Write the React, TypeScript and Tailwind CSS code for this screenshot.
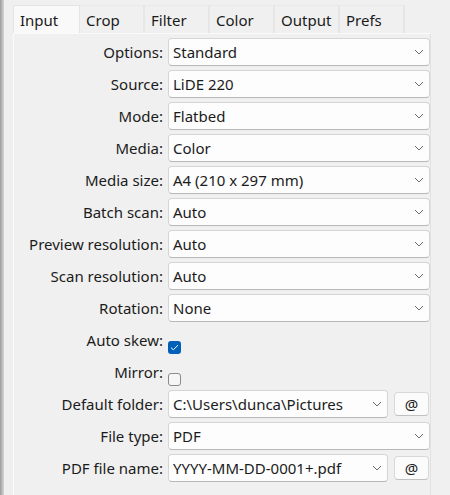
import React from 'react';

const font = { fontFamily: '"Noto Sans", "Open Sans", sans-serif' };

const tabs = ['Input', 'Crop', 'Filter', 'Color', 'Output', 'Prefs'];

type Row =
  | { label: string; kind: 'combo'; value: string; button?: boolean }
  | { label: string; kind: 'check'; checked: boolean };

const rows: Row[] = [
  { label: 'Options:', kind: 'combo', value: 'Standard' },
  { label: 'Source:', kind: 'combo', value: 'LiDE 220' },
  { label: 'Mode:', kind: 'combo', value: 'Flatbed' },
  { label: 'Media:', kind: 'combo', value: 'Color' },
  { label: 'Media size:', kind: 'combo', value: 'A4 (210 x 297 mm)' },
  { label: 'Batch scan:', kind: 'combo', value: 'Auto' },
  { label: 'Preview resolution:', kind: 'combo', value: 'Auto' },
  { label: 'Scan resolution:', kind: 'combo', value: 'Auto' },
  { label: 'Rotation:', kind: 'combo', value: 'None' },
  { label: 'Auto skew:', kind: 'check', checked: true },
  { label: 'Mirror:', kind: 'check', checked: false },
  { label: 'Default folder:', kind: 'combo', value: 'C:\\Users\\dunca\\Pictures', button: true },
  { label: 'File type:', kind: 'combo', value: 'PDF' },
  { label: 'PDF file name:', kind: 'combo', value: 'YYYY-MM-DD-0001+.pdf', button: true },
];

function Chevron() {
  return (
    <svg width="10" height="6" viewBox="0 0 10 6" className="shrink-0">
      <path d="M1 1 L5 5 L9 1" fill="none" stroke="#6a6a6a" strokeWidth="1" />
    </svg>
  );
}

function Combo({ value, narrow }: { value: string; narrow?: boolean }) {
  return (
    <div
      className={`h-[28px] ${narrow ? 'w-[220px]' : 'w-[262px]'} flex items-center justify-between pl-[4px] pr-[5px] bg-[#fdfdfd] border border-[#d5d5d5] border-b-[#b8b8b8] rounded-[4px]`}
    >
      <span className="text-[15px] text-[#1b1b1b] leading-none">{value}</span>
      <Chevron />
    </div>
  );
}

function Check({ checked }: { checked: boolean }) {
  return checked ? (
    <div className="mt-[15px] w-[13px] h-[13px] rounded-[3px] bg-[#005fb8] flex items-center justify-center">
      <svg width="9" height="7" viewBox="0 0 9 7">
        <path d="M1 3.6 L3.3 5.8 L8 1.2" fill="none" stroke="#ffffff" strokeWidth="1" />
      </svg>
    </div>
  ) : (
    <div className="mt-[15px] w-[13px] h-[13px] rounded-[3px] border border-[#8a8a8a] bg-[#f6f6f6]" />
  );
}

export default function App() {
  return (
    <div className="w-[450px] h-[495px] bg-[#f0f0f0] flex overflow-hidden" style={font}>
      <div className="w-[4px] h-full bg-gradient-to-r from-[#9a9a9a] to-[#d8d8d8]" />
      <div className="w-[9px] h-full bg-[#efefef]" />
      <div className="flex flex-col w-[418px]">
        <div className="pt-[5px] flex h-[33px]">
          {tabs.map((t, i) => (
            <div
              key={t}
              className={`h-[28px] pl-[6px] pt-[3px] text-[15px] text-[#1b1b1b] ${
                i === 0
                  ? 'w-[67px] bg-[#f9f9f9] border-t border-l border-r border-[#e4e4e4]'
                  : 'w-[65px] bg-[#f0f0f0] border-r-2 border-[#e6e6e6] border-t border-t-[#e9e9e9]'
              }`}
            >
              {t}
            </div>
          ))}
        </div>
        <div className="flex-1 border-t border-[#fafafa] border-l border-r border-l-[#fbfbfb] border-r-[#e2e2e2] pt-[2px]">
          {rows.map((r) => (
            <div key={r.label} className="h-[32px] flex items-start">
              <div className="w-[149px] h-[32px] flex items-center justify-end text-[15px] text-[#1b1b1b] leading-none">
                {r.label}
              </div>
              <div className="ml-[5px] h-[32px] flex items-start pt-[2px]">
                {r.kind === 'combo' ? (
                  <div className="flex items-center gap-[6px]">
                    <Combo value={r.value} narrow={r.button} />
                    {r.button && (
                      <div className="h-[24px] w-[35px] flex items-center justify-center bg-[#fbfbfb] border border-[#d8d8d8] border-b-[#c0c0c0] rounded-[4px] text-[15px] text-[#1b1b1b]">
                        @
                      </div>
                    )}
                  </div>
                ) : (
                  <Check checked={r.checked} />
                )}
              </div>
            </div>
          ))}
        </div>
      </div>
    </div>
  );
}
